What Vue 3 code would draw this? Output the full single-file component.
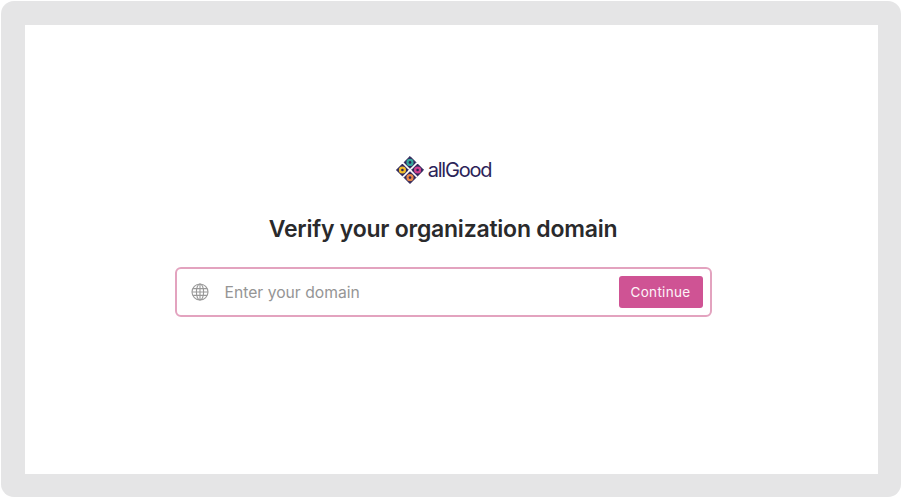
<script setup>
const title = 'Verify your organization domain'
</script>

<template>
  <div class="frame">
    <main class="panel">
      <div class="logo">
        <svg class="mark" width="30" height="30" viewBox="0 0 30 30">
          <g fill="#2b2358" stroke="#2b2358" stroke-width="1" stroke-linejoin="round">
            <path d="M15 1.5l5.9 5.9-5.9 5.9-5.9-5.9z" />
            <path d="M22.6 9.1l5.9 5.9-5.9 5.9-5.9-5.9z" />
            <path d="M15 16.7l5.9 5.9-5.9 5.9-5.9-5.9z" />
            <path d="M7.4 9.1l5.9 5.9-5.9 5.9-5.9-5.9z" />
          </g>
          <circle cx="15" cy="7.4" r="3.6" fill="#35a59b" />
          <circle cx="22.6" cy="15" r="3.6" fill="#d0408f" />
          <circle cx="15" cy="22.6" r="3.6" fill="#e8864a" />
          <circle cx="7.4" cy="15" r="3.6" fill="#f0bd2c" />
          <circle cx="15" cy="7.4" r="1.3" fill="#2b2358" />
          <circle cx="22.6" cy="15" r="1.3" fill="#2b2358" />
          <circle cx="15" cy="22.6" r="1.3" fill="#2b2358" />
          <circle cx="7.4" cy="15" r="1.3" fill="#2b2358" />
        </svg>
        <span class="brand">allGood</span>
      </div>

      <h1 class="title">{{ title }}</h1>

      <form class="domain" @submit.prevent>
        <svg class="globe" width="18" height="18" viewBox="0 0 18 18" fill="none" stroke="#999" stroke-width="1.1">
          <circle cx="9" cy="9" r="8" />
          <ellipse cx="9" cy="9" rx="3.6" ry="8" />
          <path d="M9 1v16M1.9 5.6h14.2M1 9h16M1.9 12.4h14.2" />
        </svg>
        <input class="field" type="text" placeholder="Enter your domain" />
        <button class="go" type="submit">Continue</button>
      </form>
    </main>
  </div>
</template>

<style>
html, body {
  margin: 0;
  background: #fff;
}
</style>

<style scoped>
.frame {
  box-sizing: border-box;
  width: 900px;
  height: 496px;
  margin: 1px;
  padding: 24px 23px 23px 24px;
  background: #e5e5e6;
  border-radius: 13px;
  font-family: Inter, "Liberation Sans", sans-serif;
}

.panel {
  box-sizing: border-box;
  height: 449px;
  padding: 130px 17px 0 0;
  background: #fff;
  display: flex;
  flex-direction: column;
  align-items: center;
}

.logo {
  display: flex;
  align-items: center;
  gap: 3px;
  height: 30px;
}

.brand {
  font-size: 20px;
  font-weight: 400;
  letter-spacing: -1.2px;
  color: #2b2358;
}

.title {
  margin: 29px 0 0;
  font-size: 23px;
  line-height: 30px;
  font-weight: 600;
  color: #2a2a2c;
  letter-spacing: -0.23px;
}

.domain {
  box-sizing: border-box;
  width: 537px;
  height: 50px;
  margin-top: 23px;
  padding: 0 7px 0 14px;
  display: flex;
  align-items: center;
  background: #fff;
  border: 2px solid #e3a3bf;
  border-radius: 6px;
}

.globe {
  flex: none;
}

.field {
  flex: 1;
  min-width: 0;
  margin-left: 16px;
  padding: 0;
  border: 0;
  outline: 0;
  background: transparent;
  font: 400 15.7px Inter, "Liberation Sans", sans-serif;
  color: #333;
}

.field::placeholder {
  color: #959595;
  opacity: 1;
}

.go {
  width: 84px;
  height: 32px;
  padding: 0;
  border: 0;
  border-radius: 3px;
  background: #cf5394;
  color: #fdf3f8;
  font: 400 13.5px Inter, "Liberation Sans", sans-serif;
  letter-spacing: 0.3px;
}
</style>
